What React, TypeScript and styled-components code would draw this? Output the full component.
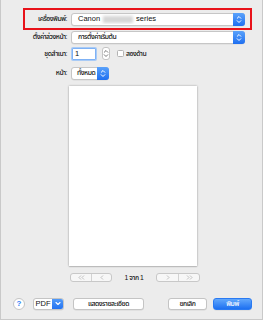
import React from "react";
import styled, { createGlobalStyle, css } from "styled-components";

const Global = createGlobalStyle`
  html, body { margin: 0; padding: 0; background: #ffffff; }
  body { font-family: "Liberation Sans", "Noto Sans Thai", "Noto Sans", sans-serif; }
  * { box-sizing: border-box; }
`;

const thaiText = css`
  font-size: 6.8px;
  letter-spacing: -0.45px;
  font-weight: 500;
  line-height: 10px;
`;

const Window = styled.div`
  width: 263px;
  height: 320px;
  background: #ececec;
  border-left: 1px solid #c9c9c9;
  border-right: 1px solid #c9c9c9;
  border-bottom: 1px solid #c9c9c9;
  padding-top: 8px;
  display: flex;
  flex-direction: column;
  font-size: 7.5px;
  color: #111111;
`;

const PrinterBox = styled.div`
  margin-left: 22px;
  width: 229px;
  height: 22px;
  border: 2px solid #e8121a;
  display: flex;
  align-items: center;
  gap: 3px;
`;

const FormRow = styled.div<{ $mt: number; $h: number }>`
  margin-top: ${(p) => p.$mt}px;
  height: ${(p) => p.$h}px;
  display: flex;
  align-items: center;
  gap: 3px;
`;

const Label = styled.span<{ $w: number }>`
  ${thaiText};
  width: ${(p) => p.$w}px;
  text-align: right;
  white-space: nowrap;
  padding-right: 1px;
`;

const PopupBox = styled.div<{ $w: number }>`
  width: ${(p) => p.$w}px;
  height: 13px;
  background: #ffffff;
  border: 1px solid #c6c6c6;
  border-radius: 3px;
  display: flex;
  align-items: center;
  box-shadow: 0 0.5px 0.5px rgba(0, 0, 0, 0.08);
`;

const PopupText = styled.span<{ $pl: number; $thai?: boolean }>`
  flex: 1;
  padding-left: ${(p) => p.$pl}px;
  white-space: nowrap;
  font-size: 7.5px;
  line-height: 10px;
  ${(p) => p.$thai && thaiText};
  display: flex;
  align-items: center;
  overflow: hidden;
`;

const BlueCap = styled.span`
  width: 12px;
  height: 13px;
  margin: -1px -1px -1px 0;
  border-radius: 0 3px 3px 0;
  background: linear-gradient(#5aa2fb, #1f6ff0);
  display: flex;
  align-items: center;
  justify-content: center;
  flex: none;
`;

const Blur = styled.span`
  display: inline-block;
  width: 30px;
  height: 7px;
  margin: 0 3px;
  background: #d6d6d6;
  filter: blur(1.5px);
`;

const CopiesInput = styled.div`
  width: 24px;
  height: 12px;
  margin-left: 1px;
  background: #fff;
  border: 1px solid #7fb2f5;
  box-shadow: 0 0 0 1px #a9cbf6;
  border-radius: 1px;
  font-size: 7.5px;
  line-height: 10px;
  padding-left: 2px;
`;

const SmallStepper = styled.div`
  width: 8px;
  height: 13px;
  margin-left: 3px;
  background: #fff;
  border: 1px solid #c3c3c3;
  border-radius: 3px;
  display: flex;
  align-items: center;
  justify-content: center;
`;

const Checkbox = styled.span`
  width: 7px;
  height: 7px;
  margin-left: 4px;
  background: #fff;
  border: 1px solid #b3b3b3;
  border-radius: 1.5px;
`;

const CheckText = styled.span`
  ${thaiText};
  margin-left: -1px;
`;

const Paper = styled.div`
  margin-top: 7px;
  margin-left: 68px;
  width: 128px;
  height: 180px;
  background: #ffffff;
  box-shadow: 0 0 2px rgba(0, 0, 0, 0.35), 0 1px 1px rgba(0, 0, 0, 0.1);
`;

const NavRow = styled.div`
  margin-top: 6px;
  margin-left: 69px;
  height: 10px;
  display: flex;
  align-items: center;
`;

const Segmented = styled.div`
  display: flex;
  height: 9px;
  border: 1px solid #c8c8c8;
  border-radius: 3px;
  background: #f7f7f7;
  overflow: hidden;
`;

const Segment = styled.span<{ $w: number }>`
  width: ${(p) => p.$w}px;
  display: flex;
  align-items: center;
  justify-content: center;
  & + & { border-left: 1px solid #d2d2d2; }
`;

const PageText = styled.span`
  ${thaiText};
  width: 44px;
  text-align: center;
  line-height: 9px;
  color: #111;
`;

const BottomRow = styled.div`
  margin-top: 15px;
  height: 13px;
  padding: 0 10px 0 12px;
  display: flex;
  align-items: center;
`;

const Help = styled.span`
  width: 12px;
  height: 12px;
  border-radius: 50%;
  background: #fff;
  border: 1px solid #c4c4c4;
  color: #2f7cf5;
  font-weight: bold;
  font-size: 8px;
  display: flex;
  align-items: center;
  justify-content: center;
`;

const Button = styled.span<{ $w: number; $ml: number; $primary?: boolean }>`
  ${thaiText};
  width: ${(p) => p.$w}px;
  height: 12px;
  margin-left: ${(p) => p.$ml}px;
  border-radius: 3px;
  border: 1px solid ${(p) => (p.$primary ? "#2a7af2" : "#c4c4c4")};
  background: ${(p) => (p.$primary ? "linear-gradient(#62a8fc, #1d70f1)" : "#ffffff")};
  color: ${(p) => (p.$primary ? "#ffffff" : "#111111")};
  display: flex;
  align-items: center;
  justify-content: center;
  white-space: nowrap;
  overflow: hidden;
  box-shadow: 0 0.5px 0.5px rgba(0, 0, 0, 0.1);
`;

const PdfLabel = styled.span`
  flex: 1;
  text-align: center;
  font-size: 7.5px;
  font-weight: 400;
  letter-spacing: 0;
`;

const Spacer = styled.span`
  flex: 1;
`;

const UpDown = ({ color }: { color: string }) => (
  <svg width="6" height="9" viewBox="0 0 6 9" fill="none">
    <path d="M1.2 3.3 L3 1.5 L4.8 3.3" stroke={color} strokeWidth="1" strokeLinecap="round" strokeLinejoin="round" />
    <path d="M1.2 5.7 L3 7.5 L4.8 5.7" stroke={color} strokeWidth="1" strokeLinecap="round" strokeLinejoin="round" />
  </svg>
);

const Down = () => (
  <svg width="6" height="5" viewBox="0 0 6 5" fill="none">
    <path d="M1 1.5 L3 3.5 L5 1.5" stroke="#fff" strokeWidth="1.1" strokeLinecap="round" strokeLinejoin="round" />
  </svg>
);

const Chev = ({ dir, double }: { dir: "l" | "r"; double?: boolean }) => {
  const one = (x: number) =>
    dir === "l" ? `M${x + 2} 1.5 L${x} 3.5 L${x + 2} 5.5` : `M${x} 1.5 L${x + 2} 3.5 L${x} 5.5`;
  return (
    <svg width={double ? 7 : 4} height="7" viewBox={`0 0 ${double ? 7 : 4} 7`} fill="none">
      <path d={one(1)} stroke="#b4b4b4" strokeWidth="0.8" />
      {double && <path d={one(4)} stroke="#b4b4b4" strokeWidth="0.8" />}
    </svg>
  );
};

const Popup = ({
  w,
  pl = 6,
  thai,
  children,
}: {
  w: number;
  pl?: number;
  thai?: boolean;
  children: React.ReactNode;
}) => (
  <PopupBox $w={w}>
    <PopupText $pl={pl} $thai={thai}>{children}</PopupText>
    <BlueCap>
      <UpDown color="#ffffff" />
    </BlueCap>
  </PopupBox>
);

export default function App() {
  return (
    <>
      <Global />
      <Window>
        <PrinterBox>
          <Label $w={43}>เครื่องพิมพ์:</Label>
          <Popup w={174}>
            Canon<Blur />series
          </Popup>
        </PrinterBox>

        <FormRow $mt={1} $h={12}>
          <Label $w={67}>ตั้งค่าล่วงหน้า:</Label>
          <Popup w={174} thai>การตั้งค่าเริ่มต้น</Popup>
        </FormRow>

        <FormRow $mt={4} $h={13}>
          <Label $w={67}>ชุดสำเนา:</Label>
          <CopiesInput>1</CopiesInput>
          <SmallStepper>
            <UpDown color="#777777" />
          </SmallStepper>
          <Checkbox />
          <CheckText>สองด้าน</CheckText>
        </FormRow>

        <FormRow $mt={7} $h={12}>
          <Label $w={67}>หน้า:</Label>
          <Popup w={38} pl={5} thai>ทั้งหมด</Popup>
        </FormRow>

        <Paper />

        <NavRow>
          <Segmented>
            <Segment $w={20}><Chev dir="l" double /></Segment>
            <Segment $w={20}><Chev dir="l" /></Segment>
          </Segmented>
          <PageText>1 จาก 1</PageText>
          <Segmented>
            <Segment $w={21}><Chev dir="r" /></Segment>
            <Segment $w={21}><Chev dir="r" double /></Segment>
          </Segmented>
        </NavRow>

        <BottomRow>
          <Help>?</Help>
          <Button $w={31} $ml={8}>
            <PdfLabel>PDF</PdfLabel>
            <BlueCap>
              <Down />
            </BlueCap>
          </Button>
          <Button $w={71} $ml={9}>แสดงรายละเอียด</Button>
          <Spacer />
          <Button $w={39} $ml={0}>ยกเลิก</Button>
          <Button $w={39} $ml={6} $primary>พิมพ์</Button>
        </BottomRow>
      </Window>
    </>
  );
}
